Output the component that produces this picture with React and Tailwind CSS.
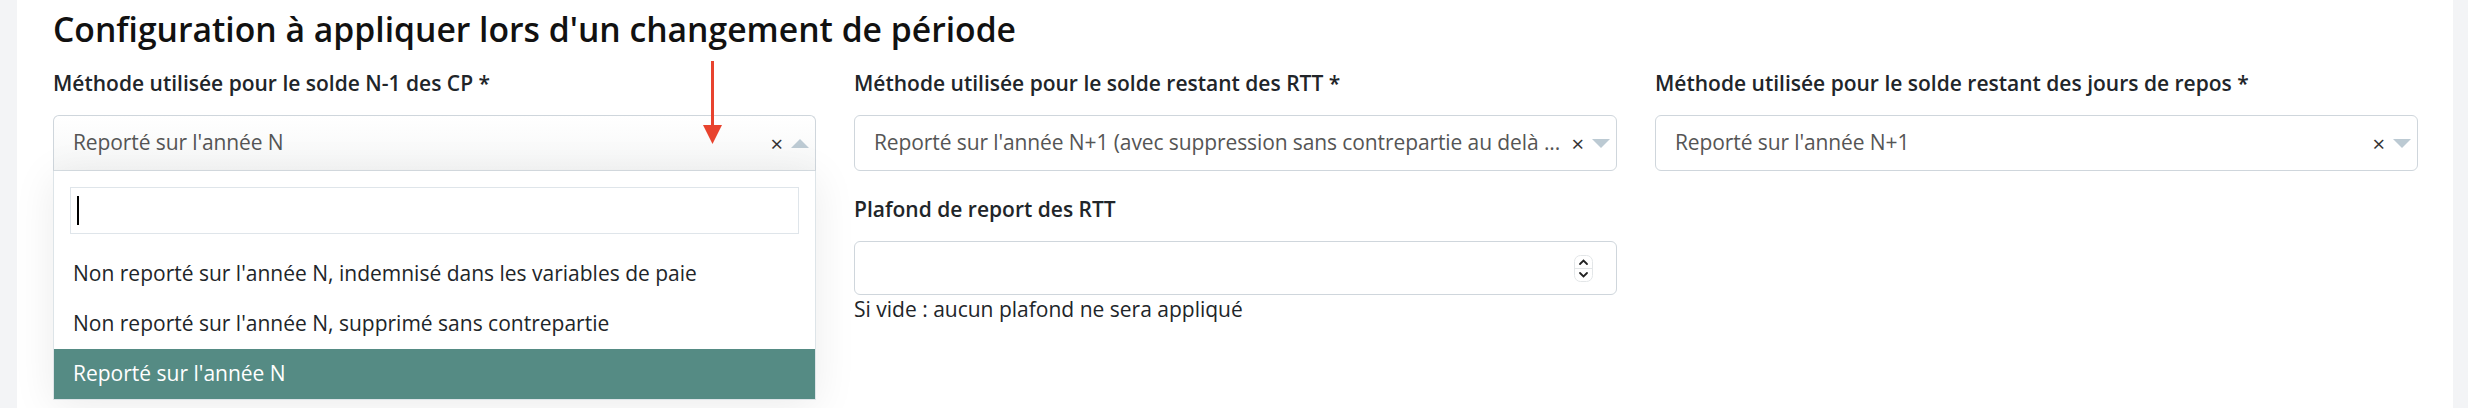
import React from "react";

const labelCls = "text-[21px] leading-[24px] font-semibold text-[#212529]";

function Caret({ up }) {
  return up ? (
    <span className="w-0 h-0 border-x-[9px] border-x-transparent border-b-[9px] border-b-[#bccad3]" />
  ) : (
    <span className="w-0 h-0 border-x-[9px] border-x-transparent border-t-[9px] border-t-[#bccad3]" />
  );
}

function SelectBox({ value, open }) {
  return (
    <div
      className={
        "h-[56px] flex items-center pl-[19px] pr-[6px] border border-[#cfd6dc] " +
        (open
          ? "rounded-t-[6px] border-b-[#d7dee3] bg-linear-to-b from-white to-[#f6f7f7]"
          : "rounded-[6px] bg-white")
      }
    >
      <span className="shrink-0 whitespace-nowrap text-[21px] tracking-[-0.1px] text-[#555555]">{value}</span>
      <span className="flex-1" />
      <span className="ml-[4px] text-[22px] leading-none text-[#333333]">×</span>
      <span className="ml-[8px] flex items-center">
        <Caret up={open} />
      </span>
    </div>
  );
}

function Spinner() {
  return (
    <svg width="19" height="27" viewBox="0 0 19 27" className="mr-[23px]">
      <rect x="0.5" y="0.5" width="18" height="26" rx="6" fill="#fff" stroke="#e3e6e8" />
      <line x1="1" y1="13.5" x2="18" y2="13.5" stroke="#e3e6e8" />
      <path d="M6 9 L9.5 5.5 L13 9" fill="none" stroke="#222" strokeWidth="1.8" strokeLinecap="round" />
      <path d="M6 18 L9.5 21.5 L13 18" fill="none" stroke="#222" strokeWidth="1.8" strokeLinecap="round" />
    </svg>
  );
}

export default function App() {
  const options = [
    "Non reporté sur l'année N, indemnisé dans les variables de paie",
    "Non reporté sur l'année N, supprimé sans contrepartie",
    "Reporté sur l'année N",
  ];

  return (
    <div className="relative flex h-[408px] w-full bg-[#f3f4f6] pl-[17px] pr-[15px] font-['Open_Sans','Lato',sans-serif] overflow-hidden">
      <div className="flex-1 bg-white pl-[36px] pr-[35px] pt-[9px]">
        <h2 className="text-[33.7px] leading-[40px] font-semibold text-[#111111]">
          Configuration à appliquer lors d'un changement de période
        </h2>

        <div className="mt-[22px] grid grid-cols-3 gap-x-[38px]">
          {/* CP */}
          <div className="flex flex-col">
            <label className={labelCls}>Méthode utilisée pour le solde N-1 des CP *</label>
            <div className="relative mt-[20px]">
              <SelectBox value="Reporté sur l'année N" open />
              <div className="absolute top-full left-0 right-0 z-10 bg-white border border-t-0 border-[#dde4e8] shadow-[0_6px_40px_rgba(0,0,0,0.08)]">
                <div className="px-[16px] pt-[16px] pb-[15px]">
                  <div className="h-[47px] border-[1.5px] border-[#dfe5ea] flex items-center">
                    <div className="ml-[6px] w-[2px] h-[29px] bg-black" />
                  </div>
                </div>
                {options.map((o, i) => (
                  <div
                    key={i}
                    className={
                      "h-[50px] flex items-center pl-[19px] text-[21px] " +
                      (i === 2 ? "bg-[#558b84] text-white" : "text-[#212529]")
                    }
                  >
                    {o}
                  </div>
                ))}
              </div>
            </div>
          </div>

          {/* RTT */}
          <div className="flex flex-col">
            <label className={labelCls}>Méthode utilisée pour le solde restant des RTT *</label>
            <div className="mt-[20px]">
              <SelectBox value="Reporté sur l'année N+1 (avec suppression sans contrepartie au delà ..." />
            </div>
            <label className={labelCls + " mt-[26px]"}>Plafond de report des RTT</label>
            <div className="mt-[20px] h-[54px] border border-[#cfd6dc] rounded-[6px] flex items-center justify-end">
              <Spinner />
            </div>
            <p className="mt-[2px] text-[21px] leading-[24px] text-[#212529]">
              Si vide : aucun plafond ne sera appliqué
            </p>
          </div>

          {/* Jours de repos */}
          <div className="flex flex-col">
            <label className={labelCls}>Méthode utilisée pour le solde restant des jours de repos *</label>
            <div className="mt-[20px]">
              <SelectBox value="Reporté sur l'année N+1" />
            </div>
          </div>
        </div>
      </div>

      {/* annotation arrow */}
      <svg className="absolute left-[702px] top-[61px]" width="21" height="84" viewBox="0 0 21 84">
        <rect x="9" y="0" width="3" height="66" fill="#e8432e" />
        <path d="M1 64 L20 64 L10.5 83 Z" fill="#e8432e" />
      </svg>
    </div>
  );
}
